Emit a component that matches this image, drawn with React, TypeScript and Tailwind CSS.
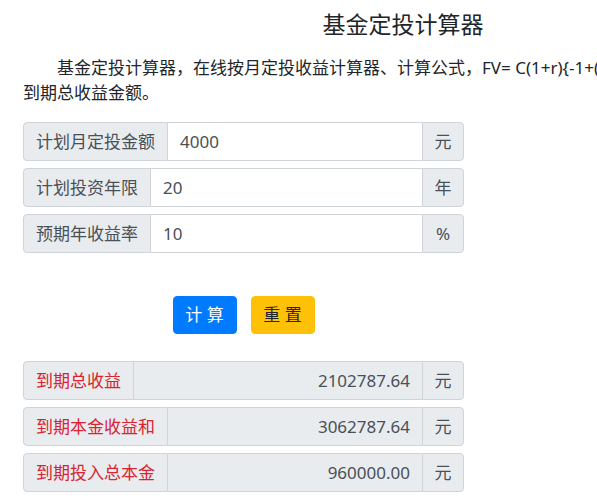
import React from 'react'

const font = 'font-["Noto_Sans","Noto_Sans_CJK_SC",sans-serif]'

type InputRowProps = {
  label: string
  value: string
  unit: string
}

// editable row, bootstrap-like input group
function InputRow({ label, value, unit }: InputRowProps) {
  return (
    <div className="flex h-[39px] w-full items-stretch text-[17px]">
      <span className="flex items-center whitespace-nowrap rounded-l-[4px] border border-[#ced4da] bg-[#e9ecef] px-[12px] text-[#495057]">
        {label}
      </span>
      <span className="flex flex-1 items-center border-y border-[#ced4da] bg-white px-[12px] text-[#495057]">
        {value}
      </span>
      <span className="flex w-[42px] items-center justify-center rounded-r-[4px] border border-[#ced4da] bg-[#e9ecef] text-[#495057]">
        {unit}
      </span>
    </div>
  )
}

// readonly result row, red label + right aligned value
function ResultRow({ label, value, unit }: InputRowProps) {
  return (
    <div className="flex h-[39px] w-full items-stretch text-[17px]">
      <span className="flex items-center whitespace-nowrap rounded-l-[4px] border border-[#ced4da] bg-[#e9ecef] px-[12px] text-[#d9232f]">
        {label}
      </span>
      <span className="flex flex-1 items-center justify-end border-y border-[#ced4da] bg-[#e9ecef] px-[12px] text-[#495057]">
        {value}
      </span>
      <span className="flex w-[42px] items-center justify-center rounded-r-[4px] border border-[#ced4da] bg-[#e9ecef] text-[#495057]">
        {unit}
      </span>
    </div>
  )
}

export default function App() {
  return (
    <div className={`h-[500px] w-full overflow-hidden bg-white text-[#212529] ${font}`}>
      <div className="w-[806px]">
        <h3 className="pt-[10px] text-center text-[23px] font-normal leading-[28px]">
          基金定投计算器
        </h3>
        <div className="px-[23px]">
          <p className="mt-[17px] indent-[2em] text-[17px] leading-[25px]">
            基金定投计算器，在线按月定投收益计算器、计算公式，FV= C(1+r){'{'}-1+(1+r)^n{'}'}/r，计算
            <br />
            到期总收益金额。
          </p>

          <div className="mt-[17px] flex w-[441px] flex-col gap-[7px]">
            <InputRow label="计划月定投金额" value="4000" unit="元" />
            <InputRow label="计划投资年限" value="20" unit="年" />
            <InputRow label="预期年收益率" value="10" unit="%" />
          </div>

          <div className="mt-[43px] flex w-[441px] justify-center gap-[14px]">
            <button className="h-[38px] w-[64px] rounded-[4px] border border-[#007bff] bg-[#007bff] text-[17px] text-white">
              计 算
            </button>
            <button className="h-[38px] w-[64px] rounded-[4px] border border-[#ffc107] bg-[#ffc107] text-[17px] text-[#212529]">
              重 置
            </button>
          </div>

          <div className="mt-[27px] flex w-[441px] flex-col gap-[7px]">
            <ResultRow label="到期总收益" value="2102787.64" unit="元" />
            <ResultRow label="到期本金收益和" value="3062787.64" unit="元" />
            <ResultRow label="到期投入总本金" value="960000.00" unit="元" />
          </div>
        </div>
      </div>
    </div>
  )
}
